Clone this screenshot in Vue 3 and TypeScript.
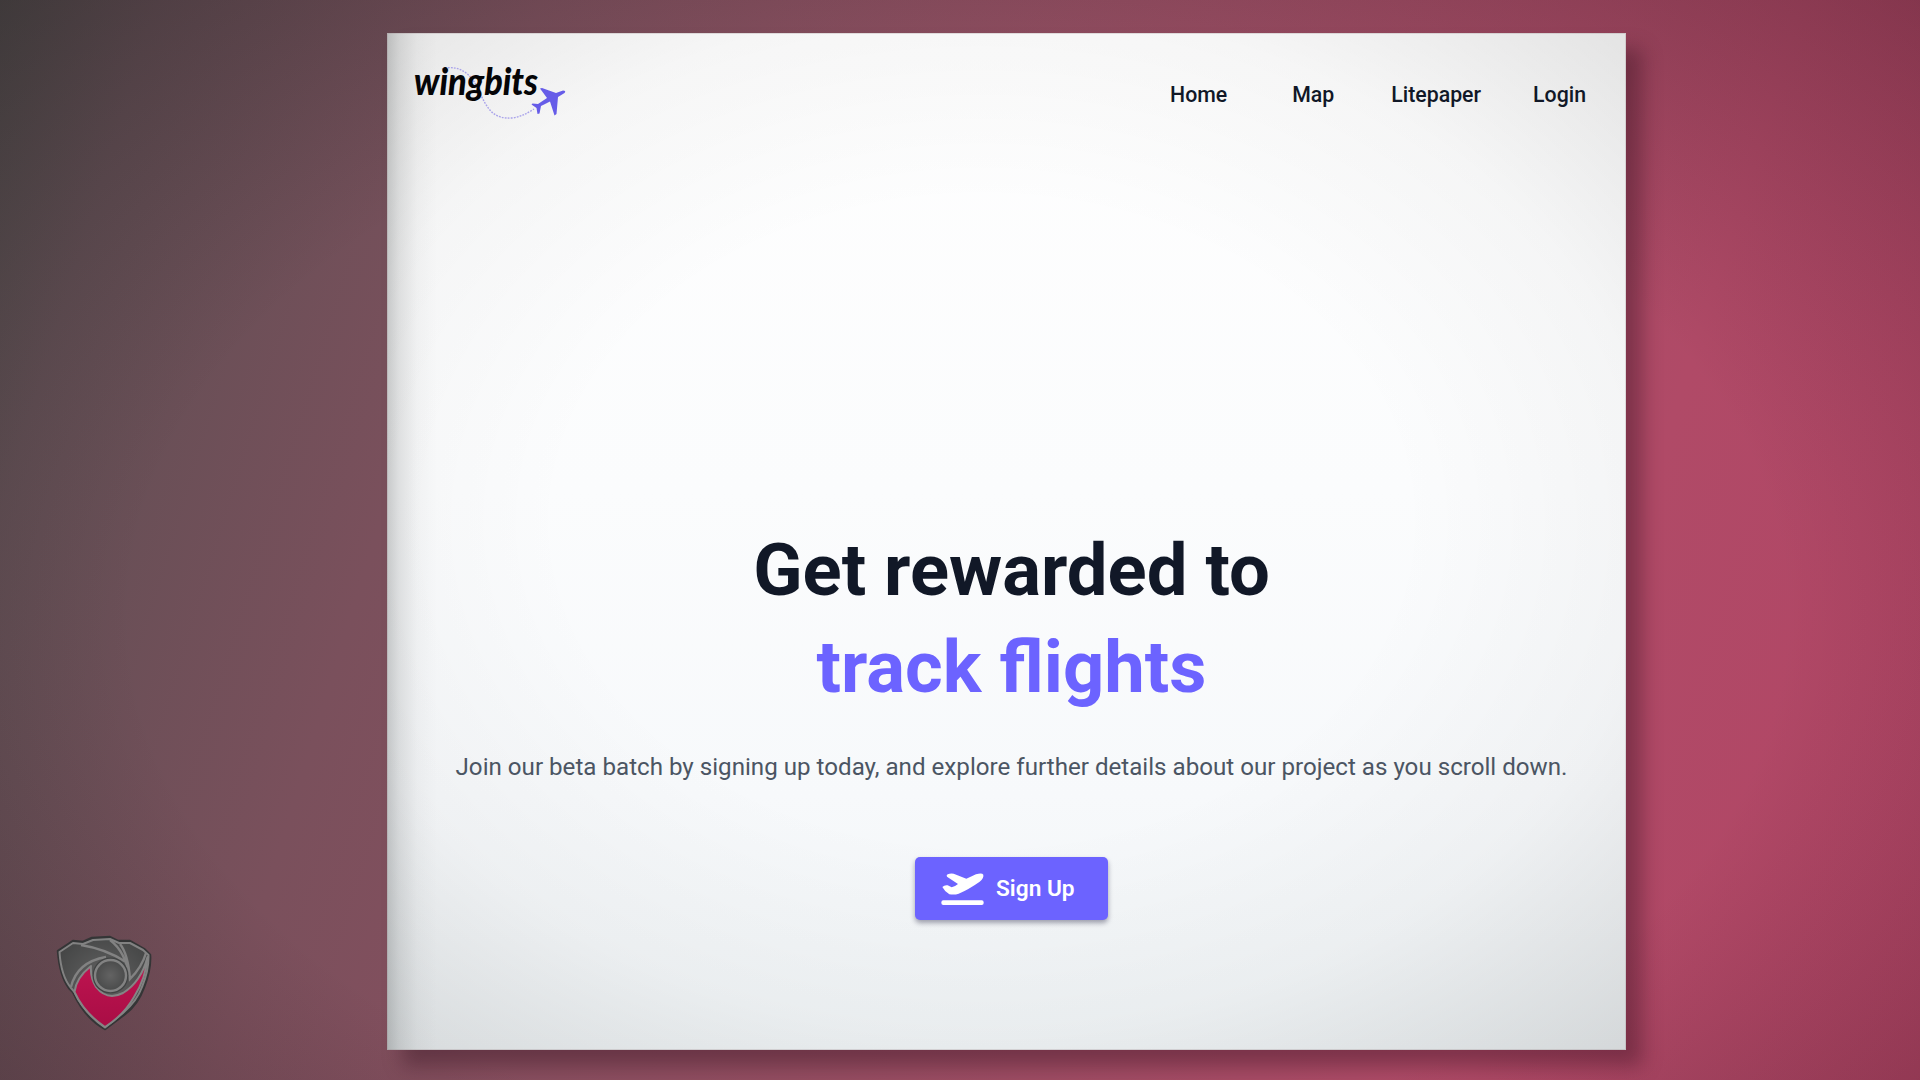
<script setup lang="ts">
interface NavItem {
  label: string
  id: string
}

const nav: NavItem[] = [
  { label: 'Home', id: 'home' },
  { label: 'Map', id: 'map' },
  { label: 'Litepaper', id: 'litepaper' },
  { label: 'Login', id: 'login' },
]
</script>

<template>
  <div class="stage">
    <svg class="shield" viewBox="0 0 130 120" width="130" height="120">
      <defs>
        <radialGradient id="steel" cx="0.5" cy="0.5" r="0.6">
          <stop offset="0" stop-color="#636363" />
          <stop offset="1" stop-color="#454646" />
        </radialGradient>
        <linearGradient id="ruby" x1="0" y1="0" x2="0" y2="1">
          <stop offset="0" stop-color="#c01551" />
          <stop offset="1" stop-color="#a90d45" />
        </linearGradient>
      </defs>
      <path d="M18 31 L33 21 L43 22 L52 18 L70 17 L78 21 L90 21 L104 29 L110 35 Q111 49 104 67 Q98 84 85 94 L65 109 Q45 98 33 72 L29 68 Q20 56 18 31Z" fill="#343536" stroke="#343536" stroke-width="2.500" stroke-linejoin="round" />
      <path d="M19.500 32 L33 23 L43 24 L53 20 L70 19 L79 23 L90 23 L103 30 L108.500 35 Q109 50 102 67 Q97 81 83 93 L65 107.500 Q45 94 34.500 72 L31 68 Q21 56 19.500 32Z" fill="url(#steel)" stroke="#828282" stroke-width="2" stroke-linejoin="round" />
      <path d="M51 46 Q36 58 34.500 72 Q44 93 65 107 Q84 95 94 77 Q106 58 107.500 37 Q101 62 83 73 Q67 81 56 67 Q50 57 51 46Z" fill="url(#ruby)" stroke="#858585" stroke-width="2" stroke-linejoin="round" />
      <path d="M31 67 Q37 42 66 37 M41 25 Q66 29 86 42 M70 20 Q86 32 90 59 M80 24 Q88 34 90 59 Q102 47 106 33" fill="none" stroke="#828282" stroke-width="2.400" />
      <circle cx="70.500" cy="55.500" r="18" fill="#414343" />
      <circle cx="70.500" cy="55.500" r="15.500" fill="url(#steel)" stroke="#828282" stroke-width="2.400" />
    </svg>

    <main class="card">
      <header class="bar">
        <svg class="brand" viewBox="0 0 160 70" width="160" height="70">
          <path d="M32 14 C48 9 61 18 68 34 C78 56 84 64 102 63 C110 62 116 59 124 54" fill="none" stroke="#a9a3ea" stroke-width="1.400" stroke-dasharray="1.800 1.200" />
          <text x="4" y="0" class="word" transform="translate(0 40) scale(1 1.080)" textLength="124" lengthAdjust="spacingAndGlyphs">wingbits</text>
          <path d="M130 33.500 L132 33 L146 38 L153 35.500 Q156.500 35.500 154.500 38 L148 42 L146.500 59 L144.500 60.500 L140 46.500 L131 51 L129.500 58.500 L127.500 59 L126.500 53 L121.500 49.500 L122.500 48.500 L128 49 L137 43Z" fill="#665ce8" />
        </svg>
        <nav class="links">
          <a v-for="item in nav" :key="item.id" :class="['link', item.id]">{{ item.label }}</a>
        </nav>
      </header>

      <section class="hero">
        <h1 class="title">
          <span class="line">Get rewarded to</span>
          <span class="line accent">track flights</span>
        </h1>
        <p class="lead">Join our beta batch by signing up today, and explore further details about our project as you scroll down.</p>
        <button class="cta" type="button">
          <svg class="plane" viewBox="150 95 135 107" width="45" height="35.670">
            <path d="M173 105 Q181 101 191 103 L229 118 L258 105 Q276 100 280 106 Q282 116 269 127 Q235 151 206 163 Q195 167 178 165 Q165 158 157 143 Q164 136 173 138 L185 144 Q196 141 204 134 L171 112 Q168 108 173 105Z" fill="#fff" />
            <rect x="154" y="183" width="127" height="14" rx="6" fill="#fff" />
          </svg>
          <span class="cta-text">Sign Up</span>
        </button>
      </section>
    </main>
  </div>
</template>

<style>
body {
  margin: 0;
  overflow: hidden;
}
</style>

<style scoped>
.stage {
  position: relative;
  box-sizing: border-box;
  width: 1920px;
  height: 1080px;
  padding: 33px 0 0 387px;
  overflow: hidden;
  font-family: Roboto, "Liberation Sans", sans-serif;
  background:
    radial-gradient(ellipse 1500px 980px at 50% 57%, transparent 55%, rgba(18, 6, 12, 0.36) 100%),
    linear-gradient(107deg, #504d4c 0%, #614f54 7%, #7a505c 24%, #b04a67 80%, #b24565 100%);
}
.shield {
  position: absolute;
  left: 40px;
  top: 920px;
}
.card {
  box-sizing: border-box;
  width: 1239px;
  height: 1017px;
  background:
    linear-gradient(90deg, rgba(50, 55, 55, 0.24) 0, rgba(50, 55, 55, 0.12) 12px, rgba(50, 55, 55, 0.03) 30px, transparent 50px),
    radial-gradient(ellipse 1160px 880px at 48% 48%, transparent 36%, rgba(0, 0, 0, 0.03) 58%, rgba(0, 0, 0, 0.18) 100%),
    linear-gradient(180deg, #fefefe 0%, #fbfcfd 45%, #f7f9fb 75%, #f0f4f6 100%);
  box-shadow:
    inset 0 0 0 1px rgba(150, 130, 135, 0.25),
    16px 16px 18px rgba(45, 10, 25, 0.36);
}
.bar {
  display: flex;
  justify-content: space-between;
  height: 120px;
  padding: 22px 40px 0 23px;
  box-sizing: border-box;
}
.word {
  font: italic 900 35px Lato, sans-serif;
  fill: #050507;
}
.links {
  display: flex;
  padding-top: 27px;
  color: #111827;
  font-size: 21.300px;
  font-weight: 500;
  line-height: 26px;
}
.map { margin-left: 65px; }
.litepaper { margin-left: 57px; }
.login { margin-left: 52px; }
.hero {
  display: flex;
  flex-direction: column;
  align-items: center;
  padding: 369px 0 0 10px;
}
.title {
  margin: 0;
  color: #111827;
  font-size: 72.400px;
  font-weight: 700;
  line-height: 97px;
  text-align: center;
}
.line { display: block; }
.accent { color: #6c63ff; }
.lead {
  margin: 33px 0 0;
  color: #4b5563;
  font-size: 24.150px;
  line-height: 36px;
  white-space: nowrap;
}
.cta {
  display: flex;
  align-items: center;
  box-sizing: border-box;
  width: 193px;
  height: 63px;
  margin-top: 72px;
  padding: 0 0 0 25px;
  border: 0;
  border-radius: 5px;
  background: #6c63ff;
  box-shadow: 0 3px 5px rgba(30, 30, 60, 0.4);
  color: #fff;
  font: 600 22.700px Roboto, sans-serif;
}
.cta-text {
  margin-left: 11px;
}
</style>
